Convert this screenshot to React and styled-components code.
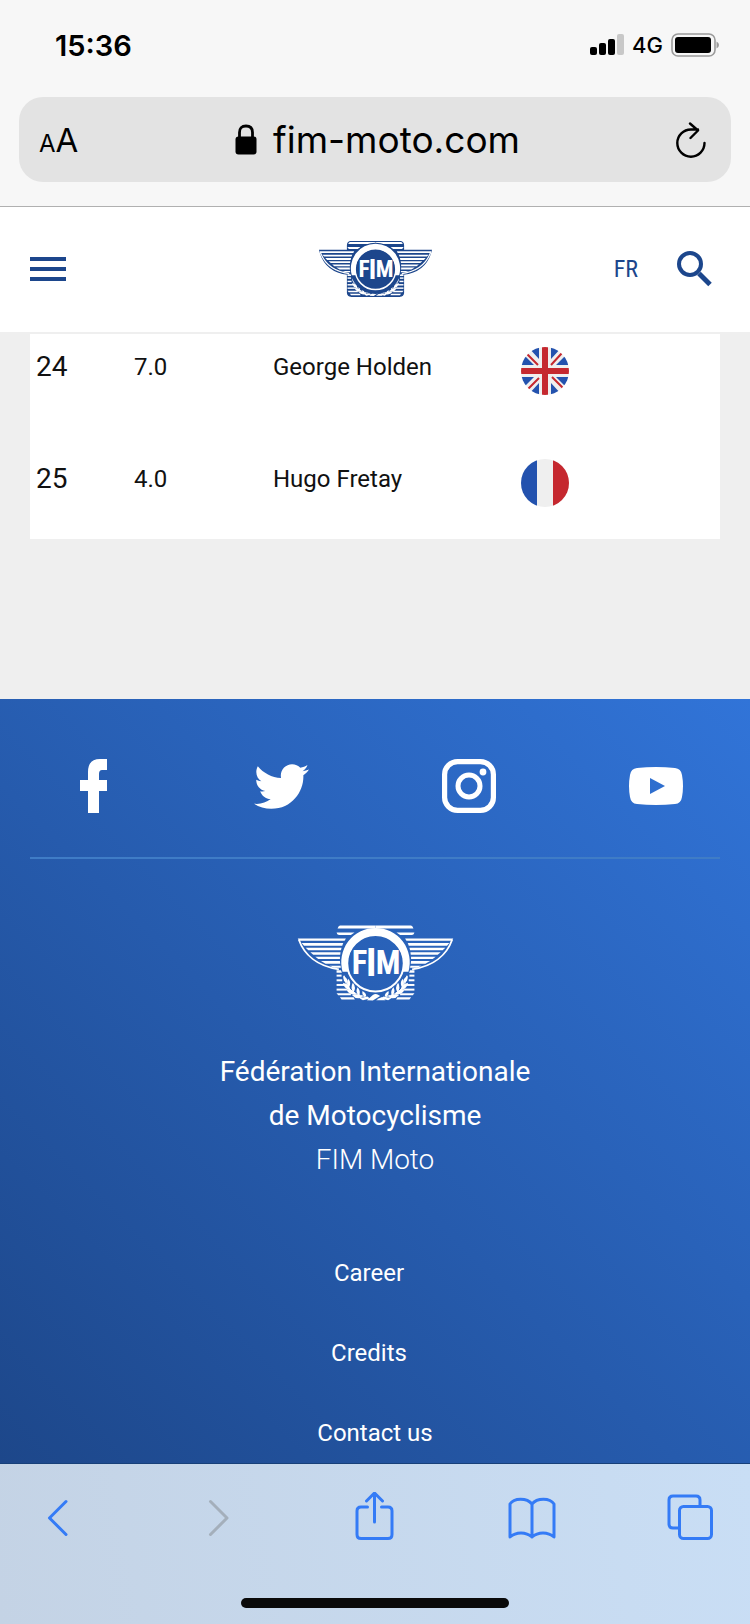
import React from 'react';
import styled, { createGlobalStyle } from 'styled-components';
import { FaTwitter } from 'react-icons/fa';

const results = [
    { rank: 24, points: '7.0', name: 'George Holden', country: 'gb' },
    { rank: 25, points: '4.0', name: 'Hugo Fretay', country: 'fr' },
];

const footerLinks = ['Career', 'Credits', 'Contact us'];

// left half of the emblem, mirrored for the right half
const EmblemHalf = () => (
    <>
        <path d="M163 45H270V54H156Q158 47 163 45Z" />
        <path d="M153 66H207L196 74H160Q154 72 153 66Z" />
        <path d="M36 84H181L177 91H42Z" />
        <path d="M48 98H173L170 106H55Z" />
        <path d="M60 112H168L166 120H68Z" />
        <path d="M74 126H165L164 133H83Z" />
        <path d="M89 139H163V146H98Z" />
        <path d="M106 152H163L164 160H120Z" />
        <path d="M132 166H165L166 172H145Z" />
        <path d="M39 87C55 132 94 168 160 177" fill="none" stroke="#fff" strokeWidth="5" />
        <path d="M153 180H166L169 187H153Z" />
        <path d="M153 193H168V199H153Z" />
        <path d="M153 207H170V213H153Z" />
        <path d="M153 221H176V227H153Z" />
        <path d="M153 235H184V241H153Z" />
        <path d="M153 249H196V255H158Z" />
        <path d="M163 261H204L208 268H168Z" />
        <path d="M176 196C178 226 197 252 240 259" fill="none" stroke="#fff" strokeWidth="3" />
        <path d="M173 196Q189 204 186 220Q171 213 173 196Z" />
        <path d="M188 205Q199 217 190 233Q180 220 188 205Z" />
        <path d="M172 217Q192 222 195 240Q176 236 172 217Z" />
        <path d="M202 217Q213 231 204 247Q193 232 202 217Z" />
        <path d="M182 237Q203 236 212 253Q191 256 182 237Z" />
        <path d="M216 231Q227 243 221 256Q208 247 216 231Z" />
        <path d="M199 254Q218 248 233 260Q214 271 199 254Z" />
        <path d="M231 242Q243 249 242 259Q227 256 231 242Z" />
        <path d="M222 264L246 259L253 265L232 270Z" />
    </>
);

const Emblem = ({ backing }) => (
    <EmblemSvg viewBox="34 41 472 234" $small={Boolean(backing)} role="img" aria-label="FIM">
        {backing && (
            <path
                d="M168 43H372Q386 44 387 58V80H503C490 136 450 172 387 180V258Q386 270 372 272H168Q154 270 153 258V180C90 172 50 136 37 80H153V58Q154 44 168 43Z"
                fill={backing}
                stroke={backing}
                strokeWidth="5"
            />
        )}
        <g fill="#fff">
            <EmblemHalf />
            <g transform="translate(540 0) scale(-1 1)"><EmblemHalf /></g>
            <path d="M244 270L262 254Q270 249 279 254L284 257L262 271Z" />
            <path d="M281 264L290 260L300 270H272Z" />
        </g>
        {backing && <circle cx="270" cy="155" r="107" fill={backing} />}
        <path d="M171 184A103 103 0 1 1 369 184L350 184A84 84 0 1 0 190 184Z" fill="#fff" />
        <circle cx="270" cy="159" r="85" fill="none" stroke="#fff" strokeWidth="6" />
        <EmblemText>
            <tspan x="222" y="192" fontSize="98">F</tspan>
            <tspan x="257" y="198" fontSize="116">I</tspan>
            <tspan x="308" y="192" fontSize="98">M</tspan>
        </EmblemText>
    </EmblemSvg>
);

const Flag = ({ country }) => (
    <FlagSvg viewBox="0 0 48 48" role="img" aria-label={country === 'gb' ? 'United Kingdom' : 'France'}>
        <clipPath id={'flag-' + country}><circle cx="24" cy="24" r="24" /></clipPath>
        <g clipPath={'url(#flag-' + country + ')'}>
            <path d="M0 0H48V48H0Z" fill="#efefef" />
            {country === 'gb' ? (
                <>
                    <path d="M0 8V18H13L0 5ZM7 0L18 12V0ZM30 0V12L41 0ZM48 5L35 18H48ZM0 30V43L13 30ZM18 36L7 48H18ZM30 36V48H41ZM35 30L48 43V30Z" fill="#2352ae" />
                    <path d="M6 7L17 18M41 6L30 18M7 42L18 31M42 41L31 30" stroke="#c5282f" strokeWidth="2" />
                    <path d="M21 0H27V21H48V27H27V48H21V27H0V21H21Z" fill="#c5282f" />
                </>
            ) : (
                <>
                    <path d="M0 0H16V48H0Z" fill="#2352ae" />
                    <path d="M32 0H48V48H32Z" fill="#c5282f" />
                </>
            )}
        </g>
    </FlagSvg>
);

const App = () => {
    return (
        <Page>
            <GlobalStyle />
            <BrowserTop>
                <StatusBar>
                    <Clock>15:36</Clock>
                    <StatusIcons>
                        <svg width="34" height="22" viewBox="0 0 34 22" aria-hidden="true">
                            <rect x="0" y="13" width="7" height="8" rx="2" />
                            <rect x="9" y="9" width="7" height="12" rx="2" />
                            <rect x="18" y="5" width="7" height="16" rx="2" />
                            <rect x="27" y="0" width="7" height="21" rx="2" fill="#c8c8c8" />
                        </svg>
                        <Network>4G</Network>
                        <svg width="48" height="24" viewBox="0 0 48 24" aria-hidden="true">
                            <rect x="1" y="1" width="43" height="22" rx="6" fill="none" stroke="#9b9b9b" strokeWidth="1.6" />
                            <rect x="4" y="4" width="36" height="16" rx="3" />
                            <path d="M45.500 8.500Q48 9.500 48 12T45.500 15.500Z" fill="#9b9b9b" />
                        </svg>
                    </StatusIcons>
                </StatusBar>
                <AddressBar>
                    <TextSize type="button" aria-label="Text size"><small>A</small>A</TextSize>
                    <Address type="button">
                        <svg width="22" height="31" viewBox="0 0 22 31" aria-hidden="true">
                            <path d="M4.500 14V8.500Q4.500 2 11 2T17.500 8.500V14" fill="none" stroke="#000" strokeWidth="2.800" />
                            <rect x="0.500" y="12.500" width="21" height="18" rx="3" />
                        </svg>
                        fim-moto.com
                    </Address>
                    <ReloadButton type="button" aria-label="Reload">
                        <svg width="30" height="36" viewBox="0 0 30 36" fill="none" stroke="#000" strokeWidth="2.400" strokeLinecap="round" strokeLinejoin="round">
                            <path d="M28.500 21A13.600 13.600 0 1 1 15 7.500H22M14 1.500L22 8.500L14.500 16" />
                        </svg>
                    </ReloadButton>
                </AddressBar>
            </BrowserTop>

            <Header>
                <MenuButton type="button" aria-label="Menu">
                    <svg width="36" height="24" viewBox="0 0 36 24" fill="#1c468c">
                        <path d="M0 0H36V4H0ZM0 10H36V14H0ZM0 20H36V24H0Z" />
                    </svg>
                </MenuButton>
                <Emblem backing="#1c468c" />
                <HeaderTools>
                    <Language href="#fr">FR</Language>
                    <SearchButton type="button" aria-label="Search">
                        <svg width="36" height="36" viewBox="0 0 36 36" fill="none" stroke="#1c468c">
                            <circle cx="14" cy="13" r="11" strokeWidth="4" />
                            <path d="M23 22.500L34 33.500" strokeWidth="5" />
                        </svg>
                    </SearchButton>
                </HeaderTools>
            </Header>

            <Main>
                <ResultTable aria-label="Results">
                    <tbody>
                        {results.map(item => (
                            <tr key={item.rank}>
                                <RankCell>{item.rank}</RankCell>
                                <PointsCell>{item.points}</PointsCell>
                                <NameCell>{item.name}</NameCell>
                                <Cell><Flag country={item.country} /></Cell>
                            </tr>
                        ))}
                    </tbody>
                </ResultTable>
            </Main>

            <Footer>
                <SocialRow>
                    <SocialLink href="#facebook" aria-label="Facebook">
                        <svg width="28" height="54" viewBox="0 0 28 54">
                            <path d="M8 54V32H0V21H8V13Q8 0 20 0H27V11H22Q19 11 19 15V21H27V32H19V54Z" />
                        </svg>
                    </SocialLink>
                    <SocialLink href="#twitter" aria-label="Twitter">
                        <FaTwitter size={55} />
                    </SocialLink>
                    <SocialLink href="#instagram" aria-label="Instagram">
                        <svg width="54" height="54" viewBox="0 0 54 54">
                            <rect x="2.600" y="2.600" width="48.800" height="48.800" rx="13" fill="none" stroke="#fff" strokeWidth="5.200" />
                            <circle cx="27" cy="27" r="11" fill="none" stroke="#fff" strokeWidth="5" />
                            <circle cx="41" cy="13" r="3.400" />
                        </svg>
                    </SocialLink>
                    <SocialLink href="#youtube" aria-label="YouTube">
                        <svg width="54" height="38" viewBox="0 0 54 38">
                            <path fillRule="evenodd" d="M8 1Q27 -1 46 1Q52 1.500 53 8Q55 19 53 30Q52 36.500 46 37Q27 39 8 37Q2 36.500 1 30Q-1 19 1 8Q2 1.500 8 1ZM21 11V27L36 19Z" />
                        </svg>
                    </SocialLink>
                </SocialRow>
                <Divider />
                <Emblem />
                <Title>
                    Fédération Internationale<br />de Motocyclisme
                    <Subtitle>FIM Moto</Subtitle>
                </Title>
                <LinkList>
                    {footerLinks.map(item => (
                        <LinkItem key={item}><FooterLink href="#footer">{item}</FooterLink></LinkItem>
                    ))}
                </LinkList>
            </Footer>

            <BrowserBottom>
                <Toolbar>
                    <ToolButton type="button" aria-label="Back">
                        <svg viewBox="0 0 48 52"><path d="M32 9.500L15.500 26L32 42.500" /></svg>
                    </ToolButton>
                    <ToolButton type="button" aria-label="Forward" $muted>
                        <svg viewBox="0 0 48 52"><path d="M18.500 9.500L35 26L18.500 42.500" /></svg>
                    </ToolButton>
                    <ToolButton type="button" aria-label="Share">
                        <svg viewBox="0 0 48 52"><path d="M17.500 15H11Q7 15 7 19V42.500Q7 46.500 11 46.500H38Q42 46.500 42 42.500V19Q42 15 38 15H31.500M24.500 30V1.500M16.500 9L24.500 1L32.500 9" /></svg>
                    </ToolButton>
                    <ToolButton type="button" aria-label="Bookmarks">
                        <svg viewBox="0 0 48 52"><path d="M24 12C19 5.500 6 5.500 2 12V45C8 39.500 18 39.500 24 45C30 39.500 40 39.500 46 45V12C42 5.500 29 5.500 24 12ZM24 12V45" /></svg>
                    </ToolButton>
                    <ToolButton type="button" aria-label="Tabs">
                        <svg viewBox="0 0 48 52"><path d="M12 36H7Q3 36 3 32V8Q3 4 7 4H30Q34 4 34 8V14" /><rect x="13.500" y="14.500" width="32" height="32" rx="4" /></svg>
                    </ToolButton>
                </Toolbar>
                <HomeIndicator />
            </BrowserBottom>
        </Page>
    );
};

const GlobalStyle = createGlobalStyle`
    * {
        box-sizing: border-box;
    }
    body {
        margin: 0;
        font-family: Roboto, sans-serif;
    }
    button {
        display: flex;
        align-items: center;
        justify-content: center;
        padding: 0;
        border: 0;
        background: none;
        font-family: inherit;
        color: inherit;
    }
    a {
        color: inherit;
        text-decoration: none;
    }
    svg {
        display: block;
    }
`;
const Page = styled.div`
    display: flex;
    flex-direction: column;
    min-height: 100vh;
    background: #efefef;
`;
const BrowserTop = styled.div`
    padding-bottom: 24px;
    border-bottom: 1px solid #b0b0b0;
    background: #f7f7f7;
    color: #000;
    font-family: Inter, sans-serif;
`;
const StatusBar = styled.div`
    display: flex;
    align-items: center;
    justify-content: space-between;
    height: 90px;
    padding: 0 31px 0 55px;
`;
const Clock = styled.span`
    font-size: 29px;
    font-weight: 600;
`;
const StatusIcons = styled.div`
    display: flex;
    align-items: center;
    gap: 8px;
`;
const Network = styled.span`
    font-size: 22px;
    font-weight: 500;
`;
const AddressBar = styled.div`
    display: grid;
    grid-template-columns: 1fr auto 1fr;
    align-items: center;
    height: 85px;
    margin: 7px 19px 0;
    padding: 0 25px 0 20px;
    border-radius: 24px;
    background: #e3e3e3;
`;
const TextSize = styled.button`
    justify-self: start;
    align-items: baseline;
    font-size: 33px;

    small {
        font-size: 24px;
    }
`;
const Address = styled.button`
    gap: 16px;
    padding-left: 10px;
    font-size: 37px;
`;
const ReloadButton = styled.button`
    justify-self: end;
`;
const Header = styled.header`
    display: grid;
    grid-template-columns: 1fr auto 1fr;
    align-items: center;
    height: 125px;
    padding: 0 30px 2px;
    background: #fff;
    color: #1c468c;
`;
const MenuButton = styled.button`
    justify-self: start;
`;
const HeaderTools = styled.div`
    display: flex;
    align-items: center;
    justify-content: flex-end;
    gap: 38px;
    padding-right: 8px;
`;
const Language = styled.a`
    font-family: 'Roboto Condensed', Roboto, sans-serif;
    font-size: 24px;
`;
const SearchButton = styled.button``;
const EmblemSvg = styled.svg`
    width: ${props => (props.$small ? 113 : 157)}px;
    height: ${props => (props.$small ? 56 : 78)}px;
`;
const EmblemText = styled.text`
    fill: #fff;
    font-family: 'Roboto Condensed', Roboto, sans-serif;
    font-weight: 700;
    text-anchor: middle;
`;
const Main = styled.main`
    padding: 2px 30px 160px;
`;
const ResultTable = styled.table`
    width: 100%;
    table-layout: fixed;
    border-collapse: collapse;
    background: #fff;
    color: #111;

    tr:last-child td {
        padding-bottom: 32px;
    }
`;
const Cell = styled.td`
    padding: 13px 7px 51px;
    font-size: 24px;
    line-height: 40px;
    vertical-align: top;
`;
const RankCell = styled(Cell)`
    width: 97px;
    padding-left: 6px;
    font-size: 28px;
`;
const PointsCell = styled(Cell)`
    width: 139px;
`;
const NameCell = styled(Cell)`
    width: 248px;
`;
const FlagSvg = styled.svg`
    width: 48px;
    height: 48px;
`;
const Footer = styled.footer`
    display: flex;
    flex: 1;
    flex-direction: column;
    align-items: center;
    padding-bottom: 14px;
    background: linear-gradient(45deg, #1d478a, #265bad 45%, #3174d8);
    color: #fff;
`;
const SocialRow = styled.div`
    display: grid;
    grid-template-columns: repeat(4, 1fr);
    align-self: stretch;
    padding: 60px 0 44px;
`;
const SocialLink = styled.a`
    display: flex;
    align-items: center;
    justify-content: center;
    height: 54px;
    fill: #fff;
`;
const Divider = styled.hr`
    align-self: stretch;
    height: 2px;
    margin: 0 30px 65px;
    border: 0;
    background: #3f7cc6;
`;
const Title = styled.h2`
    margin: 48px 0 75px;
    font-size: 28px;
    font-weight: 400;
    line-height: 44px;
    text-align: center;
`;
const Subtitle = styled.span`
    display: block;
    font-weight: 300;
`;
const LinkList = styled.ul`
    display: flex;
    flex-direction: column;
    align-items: center;
    gap: 48px;
    margin: 0;
    padding: 0;
    list-style: none;
`;
const LinkItem = styled.li`
    font-size: 24px;
    line-height: 32px;

    &:not(:last-child) {
        padding-right: 12px;
    }
`;
const FooterLink = styled.a``;
const BrowserBottom = styled.div`
    padding-bottom: 16px;
    border-top: 1px solid #174079;
    background: linear-gradient(80deg, #c4d3e5, #c9def5);
`;
const Toolbar = styled.nav`
    display: flex;
    align-items: center;
    justify-content: space-between;
    height: 108px;
    padding: 0 36px 0 34px;
`;
const ToolButton = styled.button`
    svg {
        width: 48px;
        height: 52px;
        fill: none;
        stroke: ${props => (props.$muted ? '#a4afbb' : '#347bf6')};
        stroke-width: 3px;
        stroke-linecap: round;
        stroke-linejoin: round;
    }
`;
const HomeIndicator = styled.div`
    width: 268px;
    height: 10px;
    margin: 26px auto 0;
    border-radius: 5px;
    background: #0a0a0a;
`;

export default App;
